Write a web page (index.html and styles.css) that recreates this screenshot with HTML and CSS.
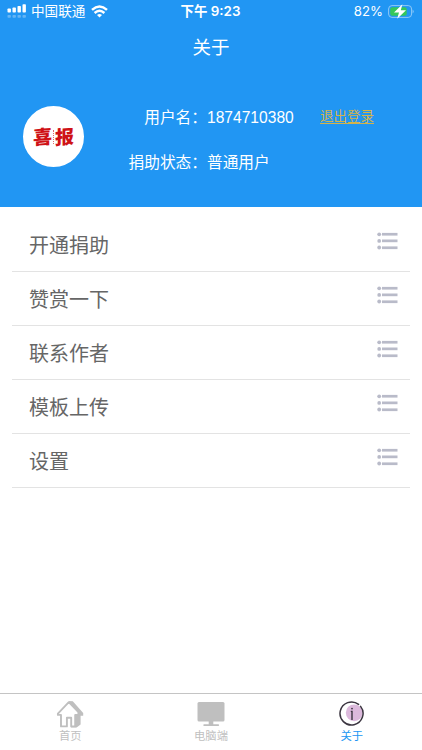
FILE: index.html
```
<!DOCTYPE html>
<html lang="zh-CN">

<head>
    <meta charset="UTF-8">
    <meta name="viewport" content="width=device-width, initial-scale=1.0">
    <title>关于</title>
    <link rel="stylesheet" href="styles.css">
</head>

<body>
    <svg class="defs" width="0" height="0">
        <symbol id="icon-list" viewBox="0 0 21 18">
            <circle cx="2.2" cy="2.3" r="1.9" />
            <circle cx="2.2" cy="8.9" r="1.9" />
            <circle cx="2.2" cy="15.5" r="1.9" />
            <rect x="5" y="0.9" width="15.5" height="2.7" />
            <rect x="5" y="7.5" width="15.5" height="2.7" />
            <rect x="5" y="14.4" width="15.5" height="2.7" />
        </symbol>
    </svg>

    <header class="header">
        <div class="status-bar">
            <div class="status-left">
                <svg class="signal" width="20" height="15" viewBox="0 0 20 15" fill="#fff">
                    <rect x="0.5" y="4.5" width="3.4" height="4" rx="0.8" />
                    <rect x="5.5" y="3.4" width="3.4" height="5.1" rx="0.8" />
                    <rect x="10.5" y="2" width="3.4" height="6.5" rx="0.8" />
                    <rect x="15.5" y="0.2" width="3.4" height="8.3" rx="0.8" />
                    <g opacity="0.3">
                        <rect x="0.5" y="10.9" width="3.4" height="2.8" rx="0.8" />
                        <rect x="5.5" y="10.9" width="3.4" height="2.8" rx="0.8" />
                        <rect x="10.5" y="10.9" width="3.4" height="2.8" rx="0.8" />
                        <rect x="15.5" y="10.9" width="3.4" height="2.8" rx="0.8" />
                    </g>
                </svg>
                <span class="carrier">中国联通</span>
                <svg width="17" height="13" viewBox="0 0 17 13" fill="none" stroke="#fff" stroke-width="2.5">
                    <path d="M1 4.9 Q8.5 -1.8 16 4.9" />
                    <path d="M3.6 8 Q8.5 3.6 13.4 8" />
                    <path d="M6 10.1 Q8.5 8 11 10.1 L8.5 12.6 Z" fill="#fff" stroke="none" />
                </svg>
            </div>
            <span class="time">下午 9:23</span>
            <div class="status-right">
                <span class="percent">82%</span>
                <svg width="26" height="15" viewBox="0 0 26 15">
                    <rect x="0.6" y="1.6" width="23" height="11.8" rx="3.4" fill="none" stroke="#8fc9f8" />
                    <rect x="2.2" y="3.2" width="16.5" height="8.6" rx="2" fill="#35c75a" />
                    <path d="M24.6 5.5 Q26.8 7.5 24.6 9.5 Z" fill="#8fc9f8" />
                    <path d="M14.4 0.2 L6 8.6 H11 L9.2 14.8 L18 6.2 H12.8 Z" fill="#fff" />
                </svg>
            </div>
        </div>
        <h1 class="title">关于</h1>
        <div class="profile">
            <div class="avatar"><span>喜</span><i></i><span>报</span></div>
            <div class="info">
                <div class="info-row"><span class="label">用户名：</span><span class="number">1874710380</span></div>
                <div class="info-row"><span class="label">捐助状态：</span><span>普通用户</span></div>
            </div>
            <a class="logout">退出登录</a>
        </div>
    </header>

    <main class="menu">
        <div class="menu-item"><span>开通捐助</span><svg class="menu-icon"><use href="#icon-list" /></svg></div>
        <div class="menu-item"><span>赞赏一下</span><svg class="menu-icon"><use href="#icon-list" /></svg></div>
        <div class="menu-item"><span>联系作者</span><svg class="menu-icon"><use href="#icon-list" /></svg></div>
        <div class="menu-item"><span>模板上传</span><svg class="menu-icon"><use href="#icon-list" /></svg></div>
        <div class="menu-item"><span>设置</span><svg class="menu-icon"><use href="#icon-list" /></svg></div>
    </main>

    <nav class="tab-bar">
        <div class="tab">
            <svg width="28" height="28" viewBox="0 0 28 28">
                <path d="M12.6 1 L16.8 1.2 L27.2 13 V15.8 H24.6 V24.4 L20.6 27.6 H15 V4 Z" fill="#bfbfbf" />
                <path d="M12.8 2.2 L1.9 13.6 V14.9 H5 V26.4 H10.9 V17.8 H15.2 V26.4 H19.2 V14.9 H22.4 V12.2 Z" fill="#fff" stroke="#bfbfbf" stroke-width="1.9" stroke-linejoin="round" />
            </svg>
            <span>首页</span>
        </div>
        <div class="tab">
            <svg width="28" height="28" viewBox="0 0 28 28" fill="#bfbfbf">
                <rect x="0.5" y="2" width="27" height="19.4" rx="1.5" />
                <rect x="11.7" y="21" width="4.6" height="4" />
                <rect x="6.3" y="24.3" width="15.8" height="1.8" rx="0.8" />
            </svg>
            <span>电脑端</span>
        </div>
        <div class="tab active">
            <svg width="28" height="28" viewBox="0 0 28 28" fill="none">
                <circle cx="16.2" cy="12.8" r="8.4" fill="#dcb9dc" />
                <path d="M20.6 4.4 A11.5 11.5 0 1 0 22.6 6.4" stroke="#3b3540" stroke-width="1.5" stroke-linecap="round" />
                <circle cx="14" cy="8.6" r="0.9" fill="#3b3540" />
                <path d="M12.8 11.4 H14 V20" stroke="#3b3540" stroke-width="1.4" />
            </svg>
            <span>关于</span>
        </div>
    </nav>
</body>

</html>
```
FILE: styles.css
```
* {
    box-sizing: border-box;
}

body {
    font-family: Inter, "Noto Sans CJK SC", sans-serif;
    display: flex;
    flex-direction: column;
    height: 100vh;
    margin: 0;
    background-color: #fff;
    overflow: hidden;
}

.defs {
    display: none;
}

svg {
    display: block;
    flex: none;
}

.header {
    height: 207px;
    background-color: #2196f3;
    color: #fff;
}

.status-bar {
    display: grid;
    grid-template-columns: 1fr auto 1fr;
    align-items: center;
    height: 23px;
    padding: 0 8px 0 7px;
    font-size: 13.6px;
    line-height: 23px;
}

.status-left,
.status-right {
    display: flex;
    align-items: center;
}

.signal {
    margin-right: 4px;
}

.carrier {
    margin-right: 6px;
}

.time {
    font-weight: 600;
    font-size: 13.4px;
}

.status-right {
    justify-content: flex-end;
    gap: 5px;
}

.percent {
    font-size: 13.2px;
}

.title {
    margin: 0;
    height: 48px;
    font-size: 18.5px;
    font-weight: 400;
    line-height: 49px;
    text-align: center;
}

.profile {
    display: flex;
    align-items: flex-start;
    padding: 24px 23px 0;
}

.avatar {
    display: flex;
    justify-content: center;
    align-items: center;
    width: 61px;
    height: 61px;
    margin-top: 11px;
    border: 2px solid #fff;
    border-radius: 50%;
    background-color: #fff;
    color: #cf1216;
    font-family: "Noto Sans CJK SC", sans-serif;
    font-size: 19px;
    font-weight: 900;
    line-height: 57px;
}

.avatar span {
    transform: translateY(-1px) skewY(-5deg);
}

.avatar i {
    height: 14px;
    margin: 0 1px;
    border-left: 1px dotted #dc6a6a;
}

.info {
    width: 218px;
    font-size: 15.7px;
}

.info-row {
    display: flex;
    height: 45px;
    line-height: 45px;
}

.label {
    width: 123px;
    text-align: right;
}

.number {
    font-family: "Liberation Sans", sans-serif;
    font-size: 15.6px;
}

.logout {
    margin-left: 18px;
    color: #d3b34b;
    font-size: 13.5px;
    line-height: 43px;
    text-decoration: underline;
    text-underline-offset: 2px;
}

.menu {
    flex: 1;
    padding: 11px 12px 0;
}

.menu-item {
    display: flex;
    justify-content: space-between;
    height: 54px;
    padding: 0 12px 0 17px;
    border-bottom: 1px solid #e3e3e3;
    color: #666;
    font-size: 20px;
    line-height: 56px;
}

.menu-icon {
    width: 21px;
    height: 18px;
    margin-top: 14px;
    fill: #b9bbc9;
}

.tab-bar {
    display: flex;
    height: 57px;
    border-top: 1px solid #c4c4c4;
}

.tab {
    display: flex;
    flex: 1;
    flex-direction: column;
    align-items: center;
    padding-top: 6px;
    color: #bfbfbf;
    font-size: 11.3px;
    line-height: 17px;
}

.tab.active {
    color: #2196f3;
}
```
